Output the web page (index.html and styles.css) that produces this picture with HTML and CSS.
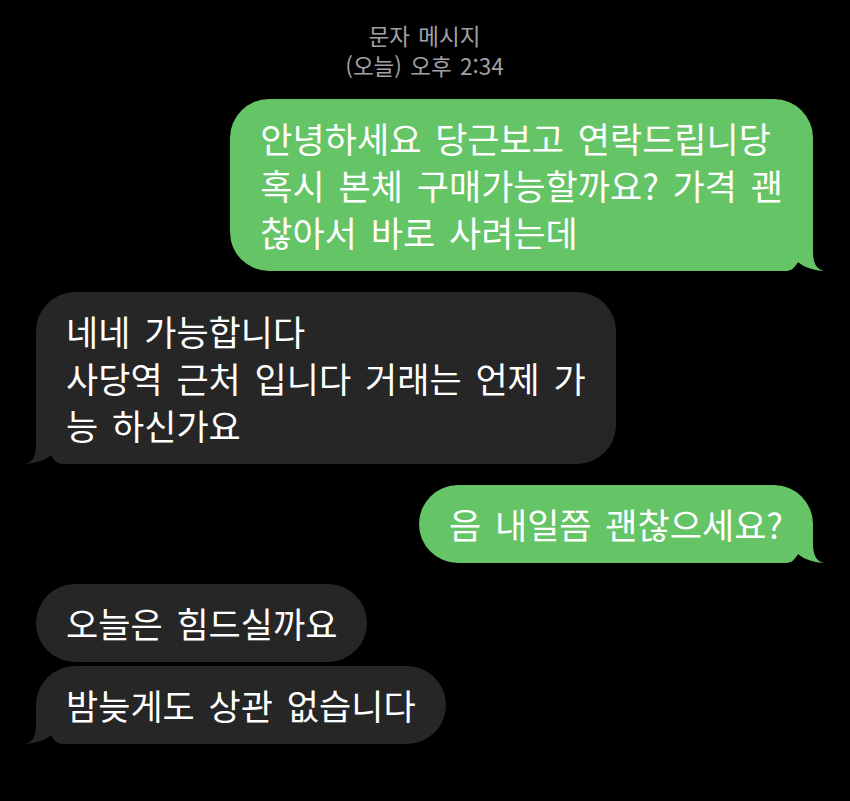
FILE: index.html
```html
<!DOCTYPE html>
<html lang="ko">
<head>
  <meta charset="UTF-8">
  <title>문자 메시지</title>
  <link rel="stylesheet" href="styles.css">
</head>
<body>
  <main class="thread">
    <header class="meta">
      <div>문자 메시지</div>
      <div>(오늘) 오후 2:34</div>
    </header>

    <div class="group out">
      <div class="bubble">
        안녕하세요 당근보고 연락드립니당<br>혹시 본체 구매가능할까요? 가격 괜<br>찮아서 바로 사려는데
        <svg class="tail" viewBox="0 0 52 40"><path d="M0 0H40V20C40 30 42 38 51 40C45 40 31 37 25 31C22 36 19 40 13 40H0Z"/></svg>
      </div>
    </div>

    <div class="group in">
      <div class="bubble">
        네네 가능합니다<br>사당역 근처 입니다 거래는 언제 가<br>능 하신가요
        <svg class="tail" viewBox="0 0 52 40"><path d="M0 0H40V20C40 30 42 38 51 40C45 40 31 37 25 31C22 36 19 40 13 40H0Z"/></svg>
      </div>
    </div>

    <div class="group out">
      <div class="bubble">
        음 내일쯤 괜찮으세요?
        <svg class="tail" viewBox="0 0 52 40"><path d="M0 0H40V20C40 30 42 38 51 40C45 40 31 37 25 31C22 36 19 40 13 40H0Z"/></svg>
      </div>
    </div>

    <div class="group in">
      <div class="bubble">오늘은 힘드실까요</div>
      <div class="bubble">
        밤늦게도 상관 없습니다
        <svg class="tail" viewBox="0 0 52 40"><path d="M0 0H40V20C40 30 42 38 51 40C45 40 31 37 25 31C22 36 19 40 13 40H0Z"/></svg>
      </div>
    </div>
  </main>
</body>
</html>
```

FILE: styles.css
```css
body {
  margin: 0;
  background-color: #000;
  font-family: "Noto Sans CJK KR", "Noto Sans", sans-serif;
}

.thread {
  display: flex;
  flex-direction: column;
  gap: 21px;
  padding: 20px 37px 0 36px;
}

.meta {
  text-align: center;
  color: #a0a0a5;
  font-size: 22.5px;
  line-height: 30px;
  word-spacing: 2px;
  margin-bottom: -2px;
}

.group {
  display: flex;
  flex-direction: column;
  gap: 4px;
}
.group.out {
  align-items: flex-end;
}
.group.in {
  align-items: flex-start;
}

.bubble {
  position: relative;
  z-index: 0;
  padding: 15px 30px 16px;
  border-radius: 39px;
  color: #fff;
  font-size: 35px;
  line-height: 47px;
  word-spacing: 4px;
  white-space: nowrap;
}
.out .bubble {
  background-color: #65c466;
}
.in .bubble {
  background-color: #262627;
}

/* tail of the last bubble in a run */
.tail {
  position: absolute;
  z-index: -1;
  bottom: 0;
  width: 52px;
  height: 40px;
}
.out .tail {
  right: -12px;
  fill: #65c466;
}
.in .tail {
  left: -12px;
  fill: #262627;
  transform: scaleX(-1);
}
```
